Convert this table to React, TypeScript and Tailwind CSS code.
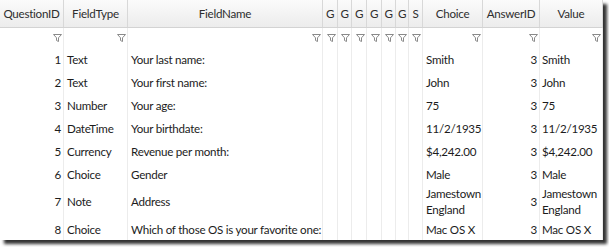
const columns = [
  { title: 'QuestionID', width: 64 },
  { title: 'FieldType', width: 64 },
  { title: 'FieldName', width: 195 },
  { title: 'G', width: 15 },
  { title: 'G', width: 14 },
  { title: 'G', width: 15 },
  { title: 'G', width: 15 },
  { title: 'G', width: 14 },
  { title: 'G', width: 13 },
  { title: 'S', width: 14 },
  { title: 'Choice', width: 60 },
  { title: 'AnswerID', width: 57 },
  { title: 'Value', width: 63 },
];

const rows = [
  { id: 1, type: 'Text', name: 'Your last name:', choice: 'Smith', answer: 3, value: 'Smith' },
  { id: 2, type: 'Text', name: 'Your first name:', choice: 'John', answer: 3, value: 'John' },
  { id: 3, type: 'Number', name: 'Your age:', choice: '75', answer: 3, value: '75' },
  { id: 4, type: 'DateTime', name: 'Your birthdate:', choice: '11/2/1935', answer: 3, value: '11/2/1935' },
  { id: 5, type: 'Currency', name: 'Revenue per month:', choice: '$4,242.00', answer: 3, value: '$4,242.00' },
  { id: 6, type: 'Choice', name: 'Gender', choice: 'Male', answer: 3, value: 'Male' },
  { id: 7, type: 'Note', name: 'Address', choice: 'Jamestown\nEngland', answer: 3, value: 'Jamestown\nEngland' },
  { id: 8, type: 'Choice', name: 'Which of those OS is your favorite one:', choice: 'Mac OS X', answer: 3, value: 'Mac OS X' },
];

const grid =
  'grid grid-cols-[64px_64px_195px_15px_14px_15px_15px_14px_13px_14px_60px_57px_63px]';

function Funnel() {
  return (
    <svg width="9" height="8" viewBox="0 0 9 8" className="block">
      <path d="M0.5 0.5 H8.5 L5.5 3.8 V7.5 L3.5 6.5 V3.8 Z" fill="none" stroke="#8a8a8a" strokeWidth="1" />
    </svg>
  );
}

export default function App() {
  return (
    <div className="bg-white w-[609px] h-[247px]" style={{ fontFamily: 'Lato, "Liberation Sans", sans-serif' }}>
      <div className="w-[603px] h-[240px] bg-white overflow-hidden shadow-[4px_4px_3px_rgba(0,0,0,0.8)] text-[11.6px] tracking-[-0.25px]">
        {/* header */}
        <div className={`${grid} h-[28px] bg-linear-to-b from-[#fbfbfb] to-[#ececec] border-b border-[#d3d3d3]`}>
          {columns.map((c, i) => (
            <div
              key={i}
              className="flex items-center justify-center border-r border-[#d8d8d8] text-[#2e2e2e] whitespace-nowrap overflow-hidden"
            >
              {c.title}
            </div>
          ))}
        </div>

        {/* filter row */}
        <div className={`${grid} h-[20px]`}>
          {columns.map((_, i) => (
            <div key={i} className="flex items-center justify-end pr-[1px] border-r border-[#ececec]">
              <Funnel />
            </div>
          ))}
        </div>

        {/* data rows */}
        {rows.map((r) => {
          const multi = r.value.includes('\n');
          const cell = `flex items-center border-r border-[#ececec] text-[#1c1c1c] whitespace-nowrap overflow-hidden ${multi ? 'h-[32px]' : 'h-[23px]'}`;
          return (
            <div key={r.id} className={`${grid} leading-[16px]`}>
              <div className={`${cell} justify-end pr-[2px]`}>{r.id}</div>
              <div className={`${cell} pl-[3px]`}>{r.type}</div>
              <div className={`${cell} pl-[3px]`}>{r.name}</div>
              {[0, 1, 2, 3, 4, 5, 6].map((g) => (
                <div key={g} className={cell} />
              ))}
              <div className={`${cell} pl-[3px] whitespace-pre-line`}>{r.choice}</div>
              <div className={`${cell} justify-end pr-[2px]`}>{r.answer}</div>
              <div className={`${cell} pl-[2px] whitespace-pre-line`}>{r.value}</div>
            </div>
          );
        })}
      </div>
    </div>
  );
}
